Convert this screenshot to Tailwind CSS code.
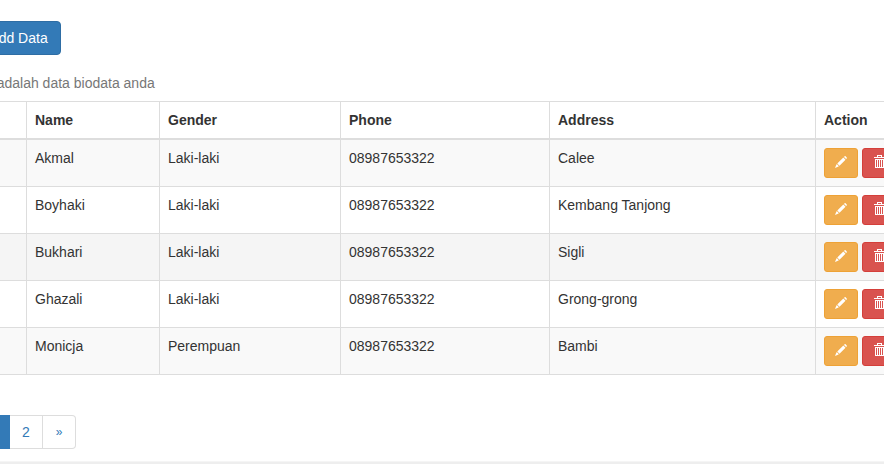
<!DOCTYPE html>
<html lang="id">
  <head>
    <meta charset="UTF-8" />
    <meta name="viewport" content="width=device-width, initial-scale=1.0" />
    <script src="https://cdn.jsdelivr.net/npm/@tailwindcss/browser@4"></script>
    <title>Biodata</title>
  </head>
  <body
    class="min-h-screen flex flex-col overflow-hidden bg-white font-['Liberation_Sans',Arial,sans-serif] text-[14px] leading-5 text-[#333]"
  >
    <!-- icons shared by every row -->
    <svg class="hidden">
      <symbol id="pencil" viewBox="0 0 12 12">
        <path fill="currentColor" d="M9 .9 9.6.3Q10.1-.2 10.6.3L11.7 1.4Q12.2 1.9 11.7 2.4L11.1 3ZM8.3 1.5 10.5 3.7 4.5 9.7 2.3 7.5ZM1.8 8.1 3.9 10.2 2.4 11 0 12 1 9.6Z" />
      </symbol>
      <symbol id="trash" viewBox="0 0 12 14">
        <path fill="currentColor" fill-rule="evenodd" d="M4 2V0H9V2H12V3H1V2ZM5 2H8V1H5ZM2 4H11V13H2ZM3 5V12H4V5ZM5 5V12H6V5ZM7 5V12H8V5ZM9 5V12H10V5Z" />
      </symbol>
    </svg>

    <main class="grow -mx-6 pt-[21px]">
      <button
        type="button"
        class="block w-[85px] rounded border border-[#2e6da4] bg-[#337ab7] py-1.5 text-white hover:bg-[#286090]"
      >
        Add Data
      </button>

      <table class="mt-[10px] w-full table-fixed border-collapse border border-[#ddd]">
        <caption class="py-2 pl-0.5 text-left text-[#777]">
          Ini adalah data biodata anda
        </caption>
        <colgroup>
          <col class="w-[50px]" />
          <col class="w-[133px]" />
          <col class="w-[181px]" />
          <col class="w-[209px]" />
          <col class="w-[266px]" />
          <col />
        </colgroup>
        <thead>
          <tr class="text-left">
            <th class="border border-b-2 border-[#ddd] p-2">#</th>
            <th class="border border-b-2 border-[#ddd] p-2">Name</th>
            <th class="border border-b-2 border-[#ddd] p-2">Gender</th>
            <th class="border border-b-2 border-[#ddd] p-2">Phone</th>
            <th class="border border-b-2 border-[#ddd] p-2">Address</th>
            <th class="border border-b-2 border-[#ddd] p-2">Action</th>
          </tr>
        </thead>
        <tbody id="rows"></tbody>
      </table>

      <nav aria-label="Pagination" class="mt-10 mb-3 flex text-center text-[#337ab7]">
        <a href="#" aria-current="page" class="w-[34px] border border-[#337ab7] bg-[#337ab7] py-1.5 text-white">1</a>
        <a href="#" class="w-[33px] border border-l-0 border-[#ddd] bg-white py-1.5">2</a>
        <a href="#" aria-label="Next" class="w-[33px] rounded-r border border-l-0 border-[#ddd] bg-white py-1.5 text-[12px] leading-5">»</a>
      </nav>
    </main>
    <footer class="h-[3px] border-t border-[#f5f5f5] bg-[#eee]"></footer>

    <script>
      const people = [
        ["Akmal", "Laki-laki", "08987653322", "Calee"],
        ["Boyhaki", "Laki-laki", "08987653322", "Kembang Tanjong"],
        ["Bukhari", "Laki-laki", "08987653322", "Sigli"],
        ["Ghazali", "Laki-laki", "08987653322", "Grong-grong"],
        ["Monicja", "Perempuan", "08987653322", "Bambi"],
      ];

      document.getElementById("rows").innerHTML = people
        .map(
          (person, i) => `
          <tr class="align-top ${i === 2 ? "bg-[#f5f5f5]" : "odd:bg-[#f9f9f9]"}">
            <td class="border border-[#ddd] p-2">${i + 1}</td>
            ${person.map((value) => `<td class="border border-[#ddd] p-2">${value}</td>`).join("")}
            <td class="border border-[#ddd] p-2">
              <div class="flex gap-1">
                <button type="button" aria-label="Edit" class="flex h-[30px] w-[34px] items-center justify-center rounded-[3px] border border-[#eea236] bg-[#f0ad4e] pb-0.5 text-white">
                  <svg class="size-3"><use href="#pencil" /></svg>
                </button>
                <button type="button" aria-label="Delete" class="flex h-[30px] w-[34px] items-center justify-center rounded-[3px] border border-[#d43f3a] bg-[#d9534f] pb-0.5 text-white">
                  <svg class="h-3.5 w-3"><use href="#trash" /></svg>
                </button>
              </div>
            </td>
          </tr>`
        )
        .join("");
    </script>
  </body>
</html>
